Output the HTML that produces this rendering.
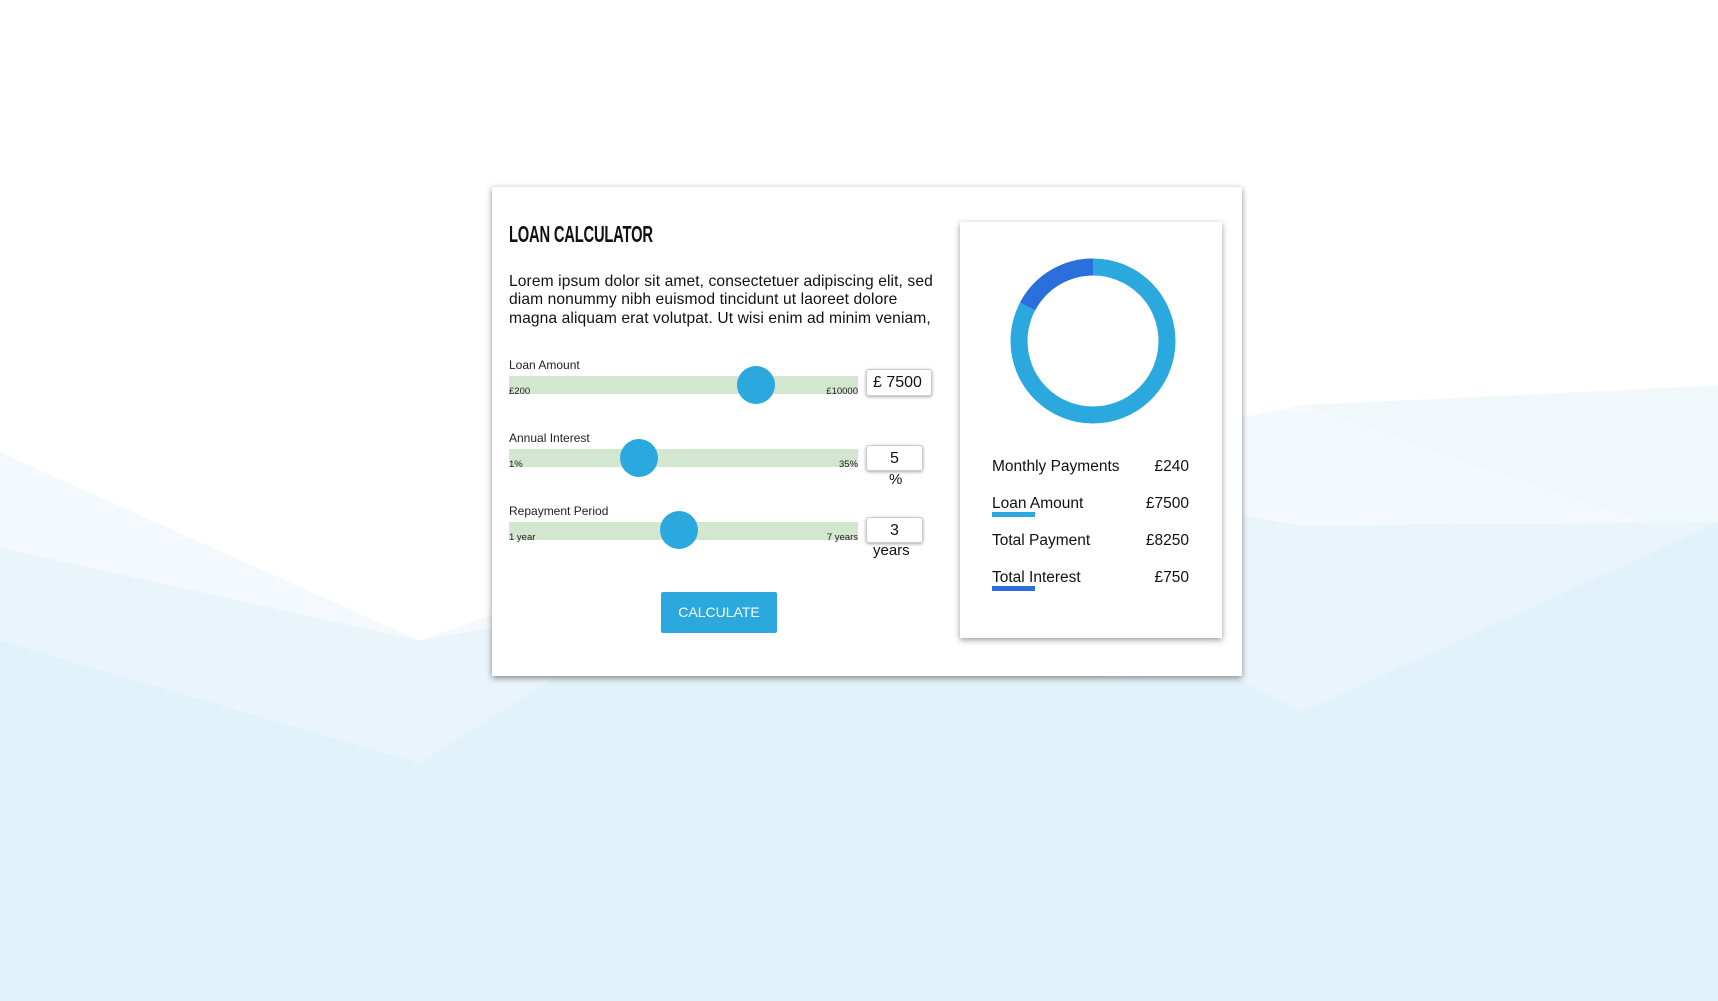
<!DOCTYPE html>
<html><head><meta charset="utf-8"><style>
*{margin:0;padding:0;box-sizing:border-box}
body{width:1718px;height:1001px;position:relative;overflow:hidden;background:#fff;font-family:"Liberation Sans",sans-serif;color:#111}
.bg{position:absolute;left:0;top:0}
.card{position:absolute;left:492px;top:187px;width:750px;height:489px;background:#fff;box-shadow:0 2px 6px rgba(0,0,0,.45)}
.a{position:absolute}
h1{position:absolute;left:17px;top:34px;font-family:"Liberation Sans Narrow","Liberation Sans",sans-serif;font-weight:bold;font-size:23px;letter-spacing:-0.3px;transform:scaleX(.64);transform-origin:left;white-space:nowrap}
.p{left:17px;top:86px;width:428px;font-size:15.6px;line-height:18.3px;letter-spacing:0.1px}
.lbl{font-size:12px;color:#222}
.track{position:absolute;left:17px;width:349px;height:18px;background:#d3e6cf}
.min,.max{position:absolute;font-size:9.5px;top:10px;color:#222}
.min{left:0}.max{right:0}
.thumb{position:absolute;width:38px;height:38px;border-radius:50%;background:#2ba8dd}
.inp{position:absolute;background:#fff;border:1px solid #ccc;border-radius:3px;box-shadow:0 1px 3px rgba(0,0,0,.35);font-size:16px;text-align:center;line-height:26px}
.unit{position:absolute;font-size:15px}
.btn{position:absolute;left:169px;top:405px;width:116px;height:41px;background:#2ba8dd;color:#fff;font-size:14px;text-align:center;line-height:41px;border-radius:2px}
.panel{position:absolute;left:468px;top:35px;width:262px;height:416px;background:#fff;box-shadow:0 2px 6px rgba(0,0,0,.4)}
.row{position:absolute;left:32px;width:197px;font-size:15.5px}
.row span{float:right}
.bar{position:absolute;left:32px;width:43px;height:5px}
</style></head><body>
<svg class="bg" width="1718" height="1001" viewBox="0 0 1568 914" preserveAspectRatio="none">
<polygon points="0,413 383,585 700,470 1188,370 1568,500 1568,914 0,914" fill="#f3f9fd"/>
<polygon points="1188,370 1568,352 1568,500" fill="#f0f8fc"/>
<polygon points="0,500 383,585 520,560 1130,470 1188,480 1568,477 1568,914 0,914" fill="#eaf5fb"/>
<polygon points="0,585 383,697 520,610 1130,620 1188,650 1568,477 1568,914 0,914" fill="#e1f2fa"/>
</svg>
<div class="card">
<h1>LOAN CALCULATOR</h1>
<div class="a p">Lorem ipsum dolor sit amet, consectetuer adipiscing elit, sed diam nonummy nibh euismod tincidunt ut laoreet dolore magna aliquam erat volutpat. Ut wisi enim ad minim veniam,</div>

<div class="a lbl" style="left:17px;top:171px">Loan Amount</div>
<div class="track" style="top:189px"><div class="min">£200</div><div class="max">£10000</div></div>
<div class="thumb" style="left:245px;top:179px"></div>
<div class="inp" style="left:374px;top:182px;width:66px;height:27px;text-align:left;padding-left:6px">£ 7500</div>

<div class="a lbl" style="left:17px;top:244px">Annual Interest</div>
<div class="track" style="top:262px"><div class="min">1%</div><div class="max">35%</div></div>
<div class="thumb" style="left:128px;top:252px"></div>
<div class="inp" style="left:374px;top:258px;width:57px;height:26px">5</div>
<div class="unit" style="left:397px;top:284px">%</div>

<div class="a lbl" style="left:17px;top:317px">Repayment Period</div>
<div class="track" style="top:335px"><div class="min">1 year</div><div class="max">7 years</div></div>
<div class="thumb" style="left:168px;top:324px"></div>
<div class="inp" style="left:374px;top:330px;width:57px;height:26px">3</div>
<div class="unit" style="left:381px;top:355px">years</div>

<div class="btn">CALCULATE</div>

<div class="panel">
<svg class="a" style="left:0;top:0" width="262" height="240">
<circle cx="133" cy="119" r="74" fill="none" stroke="#2ba8dd" stroke-width="17"/>
<circle cx="133" cy="119" r="74" fill="none" stroke="#2a6fdb" stroke-width="17" stroke-dasharray="80 465" transform="rotate(-152 133 119)"/>
</svg>
<div class="row" style="top:236px">Monthly Payments<span>£240</span></div>
<div class="row" style="top:273px">Loan Amount<span>£7500</span></div>
<div class="bar" style="top:290px;background:#2ba8dd"></div>
<div class="row" style="top:310px">Total Payment<span>£8250</span></div>
<div class="row" style="top:347px">Total Interest<span>£750</span></div>
<div class="bar" style="top:364px;background:#2a6fdb"></div>
</div>
</div>
</body></html>
